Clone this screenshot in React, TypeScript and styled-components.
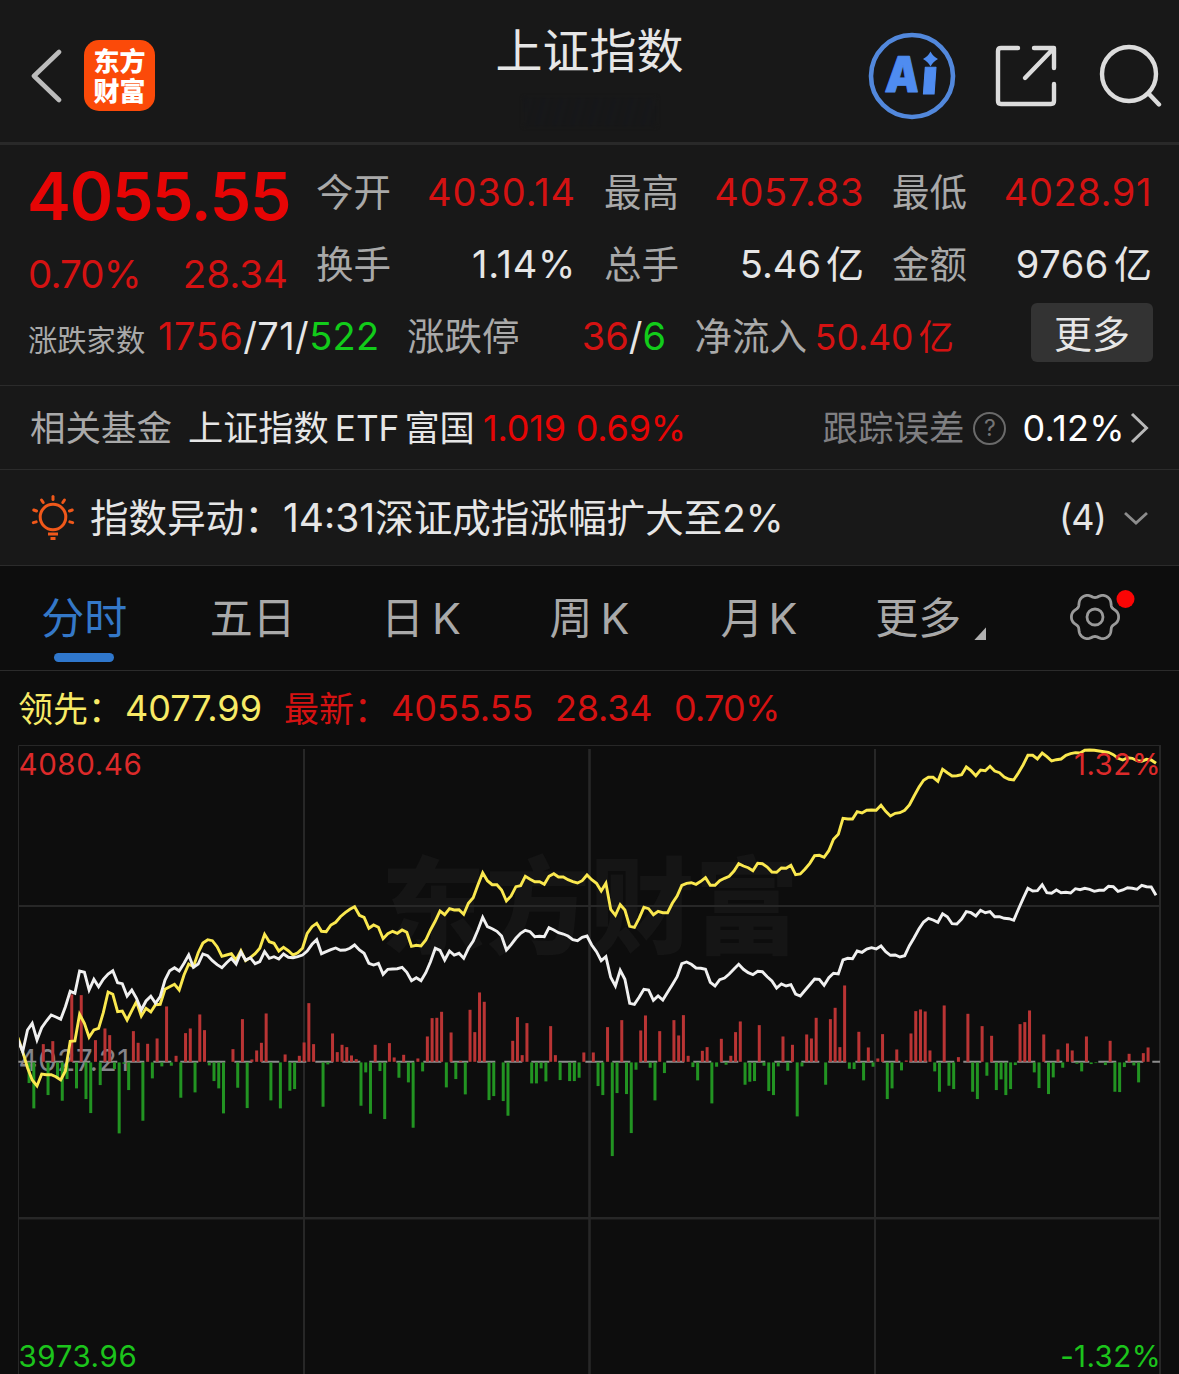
import React from 'react';
import styled, { createGlobalStyle } from 'styled-components';

const RED = '#e60505';
const SOFT_RED = '#d41212';
const GREEN = '#12cc1a';
const LABEL = '#a9a9a9';
const TEXT = '#e6e6e6';

const GlobalStyle = createGlobalStyle`
  *, *::before, *::after { box-sizing: border-box; }
  body { margin: 0; background: #0d0d0d; overflow: hidden; }
`;

const Screen = styled.main`
  width: 1179px;
  height: 1374px;
  overflow: hidden;
  display: flex;
  flex-direction: column;
  background: #0d0d0d;
  color: ${TEXT};
  font-family: Inter, 'Noto Sans CJK SC', sans-serif;
  white-space: nowrap;
`;

/* ---------- header ---------- */

const Header = styled.header`
  height: 145px;
  flex: none;
  display: grid;
  grid-template-columns: 340px 1fr 340px;
  background: #181818;
  border-bottom: 3px solid #292929;
`;

const HeaderLeft = styled.div`
  display: flex;
  align-items: center;
  gap: 20px;
  padding: 8px 0 0 30px;
`;

const Logo = styled.div`
  width: 71px;
  height: 71px;
  border-radius: 15px;
  background: #fb4a09;
  color: #fff;
  display: grid;
  grid-template-rows: 30px 30px;
  justify-content: center;
  align-content: center;
  padding-bottom: 1px;
  font: 900 26px/29px 'Noto Sans CJK SC', sans-serif;
`;

const TitleBlock = styled.div`
  display: flex;
  flex-direction: column;
  align-items: center;
  padding-top: 17px;
`;

const Title = styled.h1`
  margin: 0;
  font-size: 47px;
  line-height: 68px;
  font-weight: 400;
`;

const FadedStatus = styled.div`
  width: 132px;
  height: 28px;
  margin-top: 13px;
  background: repeating-linear-gradient(105deg, #15161a 0 5px, #191919 5px 9px, #141518 9px 12px, #181818 12px 17px);
  filter: blur(2px);
`;

const HeaderActions = styled.div`
  display: flex;
  align-items: center;
  padding: 10px 0 0 29px;
  gap: 38px;
`;

/* ---------- quote panel ---------- */

const Quote = styled.section`
  height: 241px;
  flex: none;
  background: #181818;
  border-bottom: 1px solid #2b2b2b;
  padding: 11px 27px 0 28px;
`;

const QuoteTop = styled.div`
  display: grid;
  grid-template-columns: repeat(4, 260px);
  column-gap: 28px;
  height: 144px;
`;

const PriceBlock = styled.div`
  display: flex;
  flex-direction: column;
`;

const Price = styled.div`
  margin-left: -1px;
  font-size: 66px;
  line-height: 81px;
  font-weight: 600;
  letter-spacing: -1.3px;
  color: ${RED};
`;

const ChangeRow = styled.div`
  display: flex;
  justify-content: space-between;
  font-size: 38.5px;
  line-height: 75px;
  color: ${SOFT_RED};
`;

const Stats = styled.div`
  display: grid;
  grid-template-rows: 72px 72px;
`;

const Stat = styled.div`
  display: flex;
  justify-content: space-between;
  align-items: center;
  font-size: 38px;
  line-height: 72px;
`;

const Label = styled.span<{ $size?: number; $color?: string; $shift?: number }>`
  font-size: ${p => p.$size ?? 37.5}px;
  color: ${p => p.$color ?? LABEL};
  margin-top: ${p => p.$shift ?? 0}px;
`;

const Value = styled.span<{ $color?: string; $size?: number; $spacing?: number; $shift?: number }>`
  color: ${p => p.$color ?? TEXT};
  font-size: ${p => p.$size ?? 38}px;
  letter-spacing: ${p => p.$spacing ?? 0}px;
  margin-top: ${p => p.$shift ?? 0}px;
`;

const Unit = styled.span`
  margin-left: 5px;
  letter-spacing: 0;
`;

const QuoteBottom = styled.div`
  display: flex;
  align-items: center;
  height: 72px;
  line-height: 72px;
`;

const Field = styled.div<{ $width: number; $end?: boolean }>`
  width: ${p => p.$width}px;
  flex: none;
  display: flex;
  justify-content: ${p => (p.$end ? 'flex-end' : 'flex-start')};
`;

const MoreButton = styled.button`
  margin: -8px -1px 0 auto;
  width: 122px;
  height: 59px;
  padding: 0;
  border: 0;
  border-radius: 6px;
  background: #333;
  color: ${TEXT};
  font: 400 38px/56px 'Noto Sans CJK SC', sans-serif;
`;

/* ---------- fund and alert rows ---------- */

const InfoRow = styled.section<{ $height: number }>`
  height: ${p => p.$height}px;
  flex: none;
  display: flex;
  align-items: center;
  background: #181818;
  border-bottom: 1px solid #2b2b2b;
  padding: 0 30px;
`;

const Push = styled.div`
  margin-left: auto;
  display: flex;
  align-items: center;
`;

const Latin = styled.span`
  margin: 0 5px 0 6px;
`;

const HelpMark = styled.span`
  width: 33px;
  height: 33px;
  margin: 1px 16px 0 9px;
  border: 2px solid #6a6a6a;
  border-radius: 50%;
  color: #747474;
  font-size: 23px;
  line-height: 29px;
  text-align: center;
`;

/* ---------- tabs ---------- */

const Tabs = styled.nav`
  height: 105px;
  flex: none;
  display: grid;
  grid-template-columns: repeat(7, 1fr);
  border-bottom: 1px solid #2b2b2b;
`;

const Tab = styled.div<{ $active?: boolean; $nudge?: number }>`
  display: flex;
  flex-direction: column;
  align-items: center;
  padding: 19px 0 0 ${p => p.$nudge ?? 0}px;
  font-size: 43px;
  line-height: 66px;
  color: ${p => (p.$active ? '#3478c8' : LABEL)};
  &::after {
    content: '';
    width: 60px;
    height: 9px;
    margin-top: 2px;
    border-radius: 5px;
    background: ${p => (p.$active ? '#2f77cc' : 'transparent')};
  }
`;

const TabText = styled.span<{ $gap?: number }>`
  display: flex;
  align-items: center;
  gap: ${p => p.$gap ?? 8}px;
`;

const Corner = styled.i`
  width: 12px;
  height: 13px;
  margin: 31px 0 0 5px;
  background: #b0b0b0;
  clip-path: polygon(100% 0, 100% 100%, 0 100%);
`;

const GearCell = styled.div`
  display: flex;
  justify-content: center;
  padding-top: 22px;
`;

/* ---------- chart ---------- */

const Legend = styled.div`
  height: 74px;
  flex: none;
  display: flex;
  align-items: center;
  padding-left: 18px;
  font-size: 36px;
`;

const ChartArea = styled.section`
  position: relative;
  flex: 1;
  min-height: 0;
`;

const Plot = styled.svg`
  position: relative;
  display: block;
`;

const Watermark = styled.div`
  position: absolute;
  left: 381px;
  top: 91px;
  color: #151515;
  font: 900 104.5px/128px 'Noto Sans CJK SC', sans-serif;
`;

const AxisLabel = styled.span<{ $top: number; $right?: boolean; $color: string }>`
  position: absolute;
  top: ${p => p.$top}px;
  ${p => (p.$right ? 'right: 18px;' : 'left: 18.5px;')}
  color: ${p => p.$color};
  font-size: 29.5px;
  line-height: 36px;
  letter-spacing: ${p => (p.$right ? 0.4 : 0.6)}px;
`;

const indexLevels = [
  900, 935, 870, 850, 900, 863, 843, 825, 831, 838, 800, 754, 760, 693, 697, 750, 718, 740, 718, 702,
  692, 728, 731, 768, 750, 775, 810, 783, 769, 790, 770, 720, 692, 683, 693, 670, 645, 682, 672, 642,
  647, 662, 674, 683, 668, 655, 672, 637, 660, 653, 671, 665, 635, 655, 650, 657, 642, 652, 653, 650,
  645, 633, 613, 599, 641, 635, 629, 624, 631, 630, 625, 615, 630, 640, 670, 675, 670, 703, 688, 687,
  686, 682, 697, 722, 713, 722, 698, 665, 625, 631, 660, 633, 645, 640, 655, 625, 603, 570, 532, 560,
  566, 574, 588, 630, 614, 595, 580, 571, 575, 590, 589, 590, 563, 570, 578, 582, 588, 599, 602, 592,
  588, 615, 635, 662, 650, 712, 738, 691, 718, 790, 793, 772, 748, 750, 781, 768, 780, 757, 734, 710,
  671, 666, 673, 684, 685, 688, 727, 738, 719, 714, 702, 687, 673, 688, 698, 704, 694, 695, 710, 723,
  744, 732, 738, 734, 762, 768, 751, 734, 717, 718, 736, 713, 700, 702, 660, 655, 656, 633, 637, 627,
  623, 627, 618, 635, 646, 645, 651, 647, 617, 593, 567, 546, 535, 540, 547, 521, 530, 551, 552, 537,
  515, 518, 528, 511, 518, 515, 530, 530, 535, 536, 541, 507, 475, 445, 453, 452, 434, 458, 460, 450,
  458, 457, 459, 446, 449, 445, 448, 454, 451, 451, 439, 440, 454, 450, 443, 445, 448, 436, 440, 441,
  466,
];

const leadLevels = [
  893, 935, 983, 1020, 1038, 1002, 1004, 1004, 1010, 1020, 993, 904, 903, 823, 850, 892, 870, 865, 818, 756,
  763, 815, 813, 840, 812, 785, 828, 805, 816, 794, 793, 748, 740, 733, 750, 705, 672, 680, 638, 609,
  599, 602, 620, 649, 645, 641, 660, 632, 662, 653, 641, 625, 583, 605, 610, 633, 622, 632, 645, 638,
  625, 580, 560, 550, 574, 575, 555, 547, 530, 518, 508, 500, 526, 532, 565, 555, 562, 596, 581, 574,
  580, 570, 577, 619, 616, 618, 600, 570, 543, 513, 524, 506, 510, 509, 523, 490, 473, 435, 398, 422,
  434, 434, 450, 483, 468, 440, 437, 409, 418, 425, 425, 433, 409, 401, 411, 411, 419, 425, 429, 422,
  405, 419, 430, 453, 430, 508, 526, 494, 510, 559, 562, 535, 502, 506, 524, 514, 518, 518, 490, 468,
  436, 430, 428, 433, 424, 413, 436, 436, 422, 415, 409, 393, 371, 378, 383, 392, 370, 371, 381, 396,
  397, 384, 385, 376, 404, 402, 387, 370, 347, 346, 352, 332, 298, 283, 235, 237, 237, 215, 219, 211,
  210, 211, 196, 214, 228, 220, 218, 211, 195, 168, 142, 121, 112, 112, 124, 88, 98, 108, 107, 104,
  81, 92, 107, 90, 92, 79, 93, 98, 111, 118, 120, 98, 74, 46, 46, 57, 39, 50, 63, 59,
  57, 46, 41, 38, 39, 31, 30, 31, 33, 35, 37, 44, 55, 60, 53, 55, 62, 64, 58, 60,
  70,
];

const momentum = [
  0, 0, -62, -138, 0, 53, -98, 62, -45, -115, -50, 202, -78, 200, -110, -152, 65, -68, 100, 80,
  -20, -213, -4, -83, 92, 57, -175, 54, -48, 70, -12, 166, -10, 18, -106, 86, 100, -90, 142, 95,
  -9, -56, -78, -153, 0, 38, -76, 128, -137, 7, 34, 57, 145, -114, 0, -138, 22, -85, -80, 18,
  58, 176, 53, 0, -133, -6, 85, 29, 51, 44, 19, 8, -130, -30, -154, 51, -26, -170, 56, 13,
  -46, 21, -60, -196, 10, -27, 76, 131, 132, 150, -75, 88, -50, 3, -96, 156, 89, 208, 180, -113,
  -101, 0, -116, -160, 63, 134, 20, 116, -63, -63, -18, -57, 107, 20, -53, 0, -56, -56, -46, 28,
  0, 28, -71, -98, 104, -281, -92, 125, -95, -212, -22, 94, 139, -16, -114, 92, -32, 0, 125, 79,
  140, 18, -14, -54, 33, 44, -123, -13, 69, -7, 18, 89, 121, -67, -58, -56, 110, -10, -86, -98,
  -12, 76, -25, 51, -162, -12, 82, 70, 132, 0, -67, 128, 162, 44, 229, -19, -20, 90, -54, 43,
  -13, 10, 83, -110, -78, 37, -24, 4, 85, 152, 157, 151, 34, -27, -88, 169, -70, -80, 14, 0,
  144, -88, -110, 107, -40, 78, -83, -51, -98, -80, -8, 113, 119, 154, -30, -77, 82, -95, -45, 37,
  -16, 55, 34, -4, -27, 76, -5, -2, 0, -8, 63, -88, -89, -14, 24, -9, -60, 26, 43, 0,
];

const LEFT = 18;
const STEP = 4.7415;
const ZERO = 316.8;
const toPoints = (levels: number[]) =>
  levels.map((v, i) => `${(LEFT + STEP * i).toFixed(1)},${(v / 3 - 5).toFixed(1)}`).join(' ');

function Chart() {
  return (
    <ChartArea>
      <Watermark>东方财富</Watermark>
      <AxisLabel $top={297} $color="#85858a">4027.21</AxisLabel>
      <Plot width="1179" height="629" viewBox="0 0 1179 629" fill="none">
        <g stroke="#272727">
          <path d="M18.5 629V.5H1160" />
          <path d="M304 4V629M875 4V629M1160 0V629" strokeWidth="2" />
          <path d="M589.5 4V629" strokeWidth="2.6" />
          <path d="M19 161H1160" strokeWidth="2" />
          <path d="M19 473.3H1160" strokeWidth="2.6" />
        </g>
        <path d={`M18.3 ${ZERO}H1160`} stroke="#8d8d8d" strokeWidth="2" strokeDasharray="18 9" />
        {momentum.map((v, i) =>
          v === 0 ? null : (
            <rect
              key={i}
              x={LEFT + STEP * i + 0.1}
              y={v > 0 ? ZERO - v / 3 : ZERO + 0.6}
              width="3"
              height={Math.abs(v) / 3}
              fill={v > 0 ? '#b93434' : '#229422'}
            />
          ),
        )}
        <clipPath id="plot"><rect x="19" y="0" width="1141" height="629" /></clipPath>
        <g clipPath="url(#plot)" strokeWidth="2.9" strokeLinejoin="miter">
          <polyline points={toPoints(leadLevels)} stroke="#fae84f" />
          <polyline points={toPoints(indexLevels)} stroke="#f0f0f0" />
        </g>
      </Plot>
      <AxisLabel $top={1} $color="#dc2a2a">4080.46</AxisLabel>
      <AxisLabel $top={1} $right $color="#dc2a2a">1.32%</AxisLabel>
      <AxisLabel $top={593} $color="#1cc41c">3973.96</AxisLabel>
      <AxisLabel $top={593} $right $color="#1cc41c">-1.32%</AxisLabel>
    </ChartArea>
  );
}

/* ---------- icons ---------- */

const BackIcon = () => (
  <svg width="34" height="56" viewBox="0 0 34 56" fill="none" stroke="#bcbcbc" strokeWidth="4.6" strokeLinecap="round" strokeLinejoin="round">
    <path d="M29 5L4 29L29 53" />
  </svg>
);

const AiText = styled.text`
  font: 900 49px Inter, sans-serif;
  stroke: #4f8cf0;
  stroke-width: 1px;
  stroke-linejoin: round;
`;

const AiIcon = () => (
  <svg width="88" height="88" viewBox="0 0 88 88" fill="#4f8cf0">
    <circle cx="44" cy="44" r="41" fill="none" stroke="#5288dc" strokeWidth="4.6" />
    <g transform="translate(16.500 59.500) skewX(-4)">
      <AiText textLength="34" lengthAdjust="spacingAndGlyphs">A</AiText>
      <AiText x="36.500" y="2.400" textLength="16" lengthAdjust="spacingAndGlyphs">ı</AiText>
    </g>
    <path d="M62.500 19.500Q65 24.500 70 27Q65 29.500 62.500 34.500Q60 29.500 55 27Q60 24.500 62.500 19.500Z" />
  </svg>
);

const ShareIcon = () => (
  <svg width="64" height="64" viewBox="0 0 64 64" fill="none" stroke="#dcdcdc" strokeWidth="4.4" strokeLinecap="round" strokeLinejoin="round">
    <path d="M24 4H7Q4 4 4 7V57Q4 60 7 60H57Q60 60 60 57V40" />
    <path d="M40 4H60V24M31 34L59 5" />
  </svg>
);

const SearchIcon = () => (
  <svg width="66" height="66" viewBox="0 0 66 66" fill="none" stroke="#dcdcdc" strokeWidth="4.4" strokeLinecap="round">
    <circle cx="33" cy="31" r="27" />
    <path d="M53 51L63 61.500" />
  </svg>
);

const BulbSvg = styled.svg`
  flex: none;
  margin: -2px 15px 0 1px;
`;

const BulbIcon = () => (
  <BulbSvg width="44" height="48" viewBox="-22 -24 44 48" fill="none" stroke="#f0581a" strokeWidth="3" strokeLinecap="round">
    <circle r="12.8" />
    <path d="M-5 17H5M-2.5 21.5H2.5" strokeLinecap="butt" />
    {[-106, -70, -34, 0, 34, 70, 106].map(a => (
      <path key={a} d="M0 -17.500V-20.500" transform={`rotate(${a})`} />
    ))}
  </BulbSvg>
);

const ChevronRight = () => (
  <svg width="24" height="34" viewBox="0 0 24 34" fill="none" stroke="#b8b8b8" strokeWidth="3">
    <path d="M7 3L21.500 17L7 31" />
  </svg>
);

const DownSvg = styled.svg`
  margin: 0 0 0 17px;
`;

const ChevronDown = () => (
  <DownSvg width="26" height="14" viewBox="0 0 26 14" fill="none" stroke="#8c8c8c" strokeWidth="2.8">
    <path d="M2 2L13 12L24 2" />
  </DownSvg>
);

const gearPath =
  Array.from({ length: 120 }, (_, i) => {
    const a = (i * Math.PI) / 60;
    const r = 21.8 + 2.1 * Math.cos(6 * a) - 0.3 * Math.cos(12 * a);
    return `${i ? 'L' : 'M'}${(r * Math.cos(a)).toFixed(2)} ${(r * Math.sin(a)).toFixed(2)}`;
  }).join('') + 'Z';

const GearIcon = () => (
  <svg width="80" height="60" viewBox="-40 -29 80 60" fill="none" stroke="#9a9a9a" strokeWidth="2.8" strokeLinejoin="round">
    <path d={gearPath} />
    <circle r="8" />
    <circle cx="30.500" cy="-18" r="9" fill="#fb0505" stroke="none" />
  </svg>
);

/* ---------- page ---------- */

type StatItem = { label: string; value: string; spacing: number; color?: string; unit?: string };

const stats: StatItem[][] = [
  [
    { label: '今开', value: '4030.14', spacing: 0.9, color: SOFT_RED },
    { label: '换手', value: '1.14%', spacing: 0.7 },
  ],
  [
    { label: '最高', value: '4057.83', spacing: 0.6, color: SOFT_RED },
    { label: '总手', value: '5.46', spacing: 0, unit: '亿' },
  ],
  [
    { label: '最低', value: '4028.91', spacing: 0.6, color: SOFT_RED },
    { label: '金额', value: '9766', spacing: 0.6, unit: '亿' },
  ],
];

export default function App() {
  return (
    <Screen>
      <GlobalStyle />
      <Header>
        <HeaderLeft>
          <BackIcon />
          <Logo><span>东方</span><span>财富</span></Logo>
        </HeaderLeft>
        <TitleBlock>
          <Title>上证指数</Title>
          <FadedStatus />
        </TitleBlock>
        <HeaderActions>
          <AiIcon />
          <ShareIcon />
          <SearchIcon />
        </HeaderActions>
      </Header>

      <Quote>
        <QuoteTop>
          <PriceBlock>
            <Price>4055.55</Price>
            <ChangeRow><Value $size={38.5} $color={SOFT_RED} $spacing={-0.9}>0.70%</Value><span>28.34</span></ChangeRow>
          </PriceBlock>
          {stats.map((column, i) => (
            <Stats key={i}>
              {column.map(s => (
                <Stat key={s.label}>
                  <Label $shift={2}>{s.label}</Label>
                  <Value $color={s.color} $spacing={s.spacing}>{s.value}{s.unit && <Unit>{s.unit}</Unit>}</Value>
                </Stat>
              ))}
            </Stats>
          ))}
        </QuoteTop>
        <QuoteBottom>
          <Field $width={130}><Label $size={29.3} $shift={9}>涨跌家数</Label></Field>
          <Field $width={249}>
            <Value $color={SOFT_RED} $spacing={0.5}>1756</Value>
            <Value $spacing={0.4}>/71/</Value>
            <Value $color={GREEN} $spacing={0.2}>522</Value>
          </Field>
          <Field $width={130}><Label $shift={2}>涨跌停</Label></Field>
          <Field $width={129} $end>
            <Value $color={SOFT_RED}>36</Value><Value>/</Value><Value $color={GREEN}>6</Value>
          </Field>
          <Field $width={141} $end><Label $shift={2}>净流入</Label></Field>
          <Field $width={147} $end><Value $color={SOFT_RED} $size={35.5} $shift={3}>50.40<Unit>亿</Unit></Value></Field>
          <MoreButton>更多</MoreButton>
        </QuoteBottom>
      </Quote>

      <InfoRow $height={84}>
        <Field $width={158}><Label $size={35.5} $shift={-4}>相关基金</Label></Field>
        <Field $width={295}>
          <Value $size={35.2} $shift={-4}>上证指数<Latin>ETF</Latin>富国</Value>
        </Field>
        <Value $size={36} $color={RED} $spacing={-0.2}>1.019 0.69%</Value>
        <Push>
          <Label $size={35.5} $color="#7f7f82" $shift={-4}>跟踪误差</Label>
          <HelpMark>?</HelpMark>
          <Value $size={36} $color="#fff" $spacing={0.3}>0.12%</Value>
          <ChevronRight />
        </Push>
      </InfoRow>

      <InfoRow $height={96}>
        <BulbIcon />
        <Value $size={38.6} $shift={-6}>指数异动：<Value $size={39}>14:31</Value>深证成指涨幅扩大至2%</Value>
        <Push>
          <Value $size={36} $spacing={-0.8} $shift={-2}>(4)</Value>
          <ChevronDown />
        </Push>
      </InfoRow>

      <Tabs>
        <Tab $active><TabText>分时</TabText></Tab>
        <Tab><TabText>五日</TabText></Tab>
        <Tab><TabText>日<span>K</span></TabText></Tab>
        <Tab><TabText>周<span>K</span></TabText></Tab>
        <Tab $nudge={2}><TabText $gap={5}>月<span>K</span></TabText></Tab>
        <Tab $nudge={9}><TabText>更多<Corner /></TabText></Tab>
        <GearCell><GearIcon /></GearCell>
      </Tabs>

      <Legend>
        <Field $width={107}><Value $size={35} $color="#f7ea66" $shift={-4}>领先：</Value></Field>
        <Field $width={159}><Value $size={36} $color="#f7ea66">4077.99</Value></Field>
        <Field $width={107}><Value $size={35} $color={SOFT_RED} $shift={-4}>最新：</Value></Field>
        <Field $width={164}><Value $size={36} $color={SOFT_RED}>4055.55</Value></Field>
        <Field $width={119}><Value $size={36} $color={SOFT_RED} $spacing={-0.2}>28.34</Value></Field>
        <Value $size={36} $color={SOFT_RED} $spacing={-0.8}>0.70%</Value>
      </Legend>

      <Chart />
    </Screen>
  );
}
